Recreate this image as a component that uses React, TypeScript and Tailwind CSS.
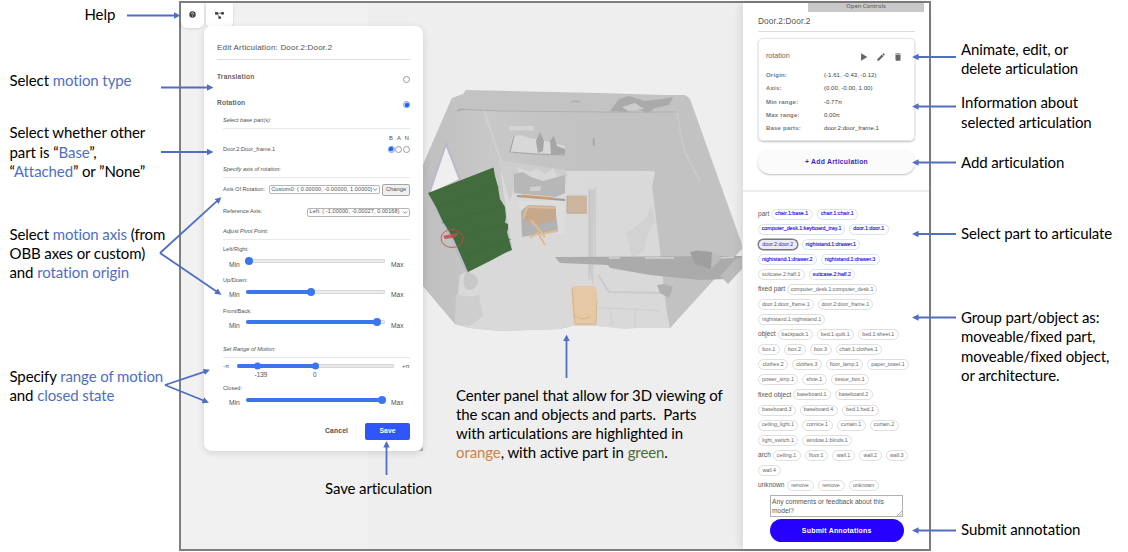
import React from "react";

const BLUE = "text-[#4f6fc1]";

function Caption({ className = "", children }: { className?: string; children: React.ReactNode }) {
  return (
    <p className={"font-['Lato','Carlito',sans-serif] text-[15px] leading-[19.2px] tracking-[-0.1px] whitespace-pre text-black [font-variant-ligatures:none] " + className}>
      {children}
    </p>
  );
}

function Radio({ on = false }: { on?: boolean }) {
  return (
    <span
      className={
        "flex size-[7px] shrink-0 items-center justify-center rounded-full border bg-white " +
        (on ? "border-[#6d9bef]" : "border-[#9a9a9a]")
      }
    >
      {on && <span className="size-[4px] shrink-0 rounded-full bg-[#1f66ea] shadow-[0_0_0_0.5px_#5f93ee]" />}
    </span>
  );
}

function Track({ value, width }: { value: number; width: string }) {
  return (
    <div className={"relative h-[4px] rounded-full bg-[#ececec] shadow-[inset_0_0_0_0.5px_#c4c4c4] " + width}>
      <div className="h-full rounded-full bg-[#3b76ee]" style={{ width: `${value}%` }} />
      <span
        className="absolute top-1/2 size-[8px] -translate-x-1/2 -translate-y-1/2 rounded-full bg-[#3b76ee]"
        style={{ left: `${value}%` }}
      />
    </div>
  );
}

function SliderBlock({ label, value }: { label: string; value: number }) {
  return (
    <div className="h-[30.67px] pl-[6px]">
      <div className="flex h-[16px] items-center pt-[4px]">{label}</div>
      <div className="flex items-start">
        <span className="mt-[5.5px] ml-[6px] w-[17px] text-[6.6px]">Min</span>
        <div className="mt-[3px]">
          <Track value={value} width="w-[139px]" />
        </div>
        <span className="mt-[5.5px] ml-[6px] text-[6.6px]">Max</span>
      </div>
    </div>
  );
}

function Chevron() {
  return (
    <svg viewBox="0 0 6 4" className="ml-auto h-[3px] w-[4.5px] shrink-0" fill="none" stroke="#555" strokeWidth="0.9">
      <path d="M0.5 0.5 3 3.2 5.5 0.5" />
    </svg>
  );
}

function EditPanel() {
  return (
    <section className="relative -mt-[2px] ml-[23px] h-[425px] w-[219px] rounded-[8px] bg-white pr-[13px] pl-[13px] font-['Liberation_Sans',Arial,sans-serif] text-[5.6px] leading-none text-[#505050] shadow-[0_2px_7px_rgba(0,0,0,0.13)]">
      <h2 className="flex h-[34px] items-center border-b border-[#dedede] pt-[10px] text-[8px] tracking-[0.2px] whitespace-nowrap">
        Edit Articulation: Door.2:Door.2
      </h2>
      <div className="mt-[5px] flex h-[26px] items-center justify-between text-[6.6px] font-bold tracking-[0.2px] text-[#666]">
        <span className="-mt-[1px]">Translation</span>
        <span className="mt-[3px]">
          <Radio />
        </span>
      </div>
      <div className="flex h-[25px] items-center justify-between text-[6.6px] font-bold tracking-[0.2px] text-[#666]">
        <span className="-mt-[1px]">Rotation</span>
        <span className="mt-[2px]">
          <Radio on />
        </span>
      </div>
      <div className="ml-[6px] flex h-[13px] items-center border-b border-[#e9e9e9] pb-[3px] italic">Select base part(s):</div>
      <div className="flex h-[14px] items-center justify-end gap-[4px] pt-[5px] pr-[1px] text-[5.8px]">
        <span>B</span>
        <span>A</span>
        <span>N</span>
      </div>
      <div className="ml-[6px] flex h-[14px] items-center">
        <span className="flex-1">Door.2:Door_frame.1</span>
        <div className="-mt-[2px] flex gap-[0.6px]">
          <Radio on />
          <Radio />
          <Radio />
        </div>
      </div>
      <div className="ml-[6px] flex h-[21px] items-center border-b border-[#e9e9e9] pt-[9px] pb-[3px] italic">Specify axis of rotation:</div>
      <div className="ml-[6px] flex h-[23px] items-center whitespace-nowrap">
        <span className="w-[46px]">Axis Of Rotation:</span>
        <div className="flex h-[9px] w-[112px] items-center rounded-[2px] border border-[#b5b5b5] px-[1.5px] text-[5.5px] tracking-[0.09px]">
          Custom0: ( 0.00000, -0.00000, 1.00000)
          <Chevron />
        </div>
        <button className="ml-[2px] flex h-[12px] w-[28px] items-center justify-center rounded-[2px] border border-[#a5a5a5] bg-[#efefef] text-[5.8px]">
          Change
        </button>
      </div>
      <div className="ml-[6px] flex h-[22px] items-center justify-between whitespace-nowrap">
        <span>Reference Axis:</span>
        <div className="flex h-[9px] w-[103px] items-center rounded-[2px] border border-[#b5b5b5] px-[1.5px] text-[5.5px] tracking-[0.09px]">
          Left: ( -1.00000, -0.00027, 0.00168)
          <Chevron />
        </div>
      </div>
      <div className="ml-[6px] flex h-[17px] items-center border-b border-[#e9e9e9] pt-[1px] italic">Adjust Pivot Point:</div>
      <SliderBlock label="Left/Right:" value={2.5} />
      <SliderBlock label="Up/Down:" value={47} />
      <SliderBlock label="Front/Back:" value={94} />
      <div className="ml-[6px] flex h-[26px] items-center border-b border-[#e9e9e9] pt-[10px] italic">Set Range of Motion:</div>
      <div className="ml-[6px] h-[21px] pt-[5px]">
        <div className="flex items-center">
          <span className="w-[14px] text-[6px]">-π</span>
          <div className="relative h-[4px] w-[157px] rounded-full bg-[#e8e8e8] shadow-[inset_0_0_0_0.5px_#c4c4c4]">
            <div className="h-full w-[78px] rounded-full bg-[#3b76ee]" />
            <span className="absolute top-1/2 left-[17px] size-[7px] -translate-y-1/2 rounded-full bg-[#3b76ee]" />
            <span className="absolute top-1/2 left-[75px] size-[7px] -translate-y-1/2 rounded-full bg-[#3b76ee]" />
          </div>
          <span className="ml-[8px] text-[6px]">+π</span>
        </div>
        <div className="mt-[3px] flex pl-[31.5px] text-[6.4px]">
          <span className="w-[58.5px]">-139</span>
          <span>0</span>
        </div>
      </div>
      <SliderBlock label="Closed:" value={97.5} />
      <div className="mt-[13px] flex items-center justify-end text-[6.8px] font-bold">
        <span className="mr-[17px] tracking-[0.1px]">Cancel</span>
        <button className="flex h-[17px] w-[45px] items-center justify-center rounded-[2px] bg-[#2f55fb] text-white">Save</button>
      </div>
      <svg viewBox="0 0 4 4" className="absolute right-0 bottom-0 size-[4px]">
        <path d="M4 0V4H0Z" fill="#a9a9a9" />
      </svg>
    </section>
  );
}

type Chip = [string, string];
type ChipRow = { label?: string; lw?: string; blue?: string[]; chips: Chip[] };

const ROWS: ChipRow[] = [
  { label: "part", lw: "w-[13px]", blue: ["chair.1:base.1", "chair.1:chair.1"], chips: [["chair.1:base.1", "w-[41.5px]"], ["chair.1:chair.1", "w-[41.5px]"]] },
  { blue: ["computer_desk.1:keyboard_tray.1", "door.1:door.1"], chips: [["computer_desk.1:keyboard_tray.1", "w-[87px]"], ["door.1:door.1", "w-[39.5px]"]] },
  { blue: ["door.2:door.2", "nightstand.1:drawer.1"], chips: [["door.2:door.2", "w-[39.5px]"], ["nightstand.1:drawer.1", "w-[58.5px]"]] },
  { blue: ["nightstand.1:drawer.2", "nightstand.1:drawer.3"], chips: [["nightstand.1:drawer.2", "w-[58.5px]"], ["nightstand.1:drawer.3", "w-[59px]"]] },
  { blue: ["suitcase.2:half.2"], chips: [["suitcase.2:half.1", "w-[46.5px]"], ["suitcase.2:half.2", "w-[46.5px]"]] },
  { label: "fixed part", lw: "w-[29px]", chips: [["computer_desk.1:computer_desk.1", "w-[90px]"]] },
  { chips: [["door.1:door_frame.1", "w-[55.5px]"], ["door.2:door_frame.1", "w-[55.5px]"]] },
  { chips: [["nightstand.1:nightstand.1", "w-[67px]"]] },
  { label: "object", lw: "w-[19.5px]", chips: [["backpack.1", "w-[35px]"], ["bed.1:quilt.1", "w-[37.5px]"], ["bed.1:sheet.1", "w-[40.5px]"]] },
  { chips: [["box.1", "w-[21.5px]"], ["box.2", "w-[22px]"], ["box.3", "w-[22px]"], ["chair.1:clothes.1", "w-[46px]"]] },
  { chips: [["clothes.2", "w-[30px]"], ["clothes.3", "w-[29.5px]"], ["floor_lamp.1", "w-[37.5px]"], ["paper_towel.1", "w-[42px]"]] },
  { chips: [["power_strip.1", "w-[40px]"], ["shoe.1", "w-[24.5px]"], ["tissue_box.1", "w-[38.5px]"]] },
  { label: "fixed object", lw: "w-[35px]", chips: [["baseboard.1", "w-[37.5px]"], ["baseboard.2", "w-[38px]"]] },
  { chips: [["baseboard.3", "w-[37.5px]"], ["baseboard.4", "w-[38px]"], ["bed.1:bed.1", "w-[37px]"]] },
  { chips: [["ceiling_light.1", "w-[40px]"], ["cornice.1", "w-[30.5px]"], ["curtain.1", "w-[29px]"], ["curtain.2", "w-[29px]"]] },
  { chips: [["light_switch.1", "w-[40px]"], ["window.1:blinds.1", "w-[50px]"]] },
  { label: "arch", lw: "w-[14.5px]", chips: [["ceiling.1", "w-[28px]"], ["floor.1", "w-[23.5px]"], ["wall.1", "w-[23px]"], ["wall.2", "w-[22.5px]"], ["wall.3", "w-[22.5px]"]] },
  { chips: [["wall.4", "w-[22.5px]"]] },
  { label: "unknown", lw: "w-[28.5px]", chips: [["remove", "w-[27px]"], ["remove", "w-[27px]"], ["unknown", "w-[30px]"]] },
];

function chipTone(name: string, blue?: string[]) {
  if (name === "door.2:door.2") return "border-[#77777f] border bg-[#ececf6] text-[#2b15d8] shadow-[0_0_0_0.5px_#77777f]";
  if (blue?.includes(name)) return "border-[#d6e4ec] border text-[#2b15e8] [-webkit-text-stroke:0.15px_#2b15e8]";
  return "border-[#dedede] border text-[#666]";
}

const INFO = [
  ["Origin:", "(-1.61, -0.43, -0.12)"],
  ["Axis:", "(0.00, -0.00, 1.00)"],
  ["Min range:", "-0.77π"],
  ["Max range:", "0.00π"],
  ["Base parts:", "door.2:door_frame.1"],
];

function Sidebar() {
  return (
    <aside className="relative ml-auto flex h-full w-[186px] flex-col bg-white pr-[14px] pl-[15px] font-['Liberation_Sans',Arial,sans-serif] leading-none text-[#444] shadow-[-2px_0_9px_rgba(0,0,0,0.1)]">
      <div className="-mr-[9px] ml-[50px] flex h-[8.5px] shrink-0 items-center justify-center bg-[#c8c8c8] font-['Noto_Sans',sans-serif] text-[5.8px] text-[#555]">
        Open Controls
      </div>
      <h2 className="flex h-[20px] shrink-0 items-center border-b border-[#dcdcdc] text-[8.3px] tracking-[0.1px] text-[#555]">Door.2:Door.2</h2>
      <div className="mt-[6.5px] h-[103px] shrink-0 rounded-[5px] border border-[#e6e6e6] px-[7px] shadow-[0_1px_2px_rgba(0,0,0,0.25)]">
        <div className="mt-[7px] flex h-[22px] items-center text-[7.1px] text-[#666]">
          <span className="flex-1">rotation</span>
          <svg viewBox="0 0 24 24" className="mr-[7px] size-[10px]" fill="#666">
            <path d="M5 3v18l15-9z" />
          </svg>
          <svg viewBox="0 0 24 24" className="mr-[7px] size-[10px]" fill="#666">
            <path d="M3 17.25V21h3.75L17.81 9.94l-3.75-3.75L3 17.25zM20.71 7.04a1 1 0 0 0 0-1.41l-2.34-2.34a1 1 0 0 0-1.41 0l-1.83 1.83 3.75 3.75 1.83-1.83z" />
          </svg>
          <svg viewBox="0 0 24 24" className="mr-[4px] size-[10px]" fill="#666">
            <path d="M6 19c0 1.1.9 2 2 2h8c1.1 0 2-.9 2-2V7H6v12zM19 4h-3.500l-1-1h-5l-1 1H5v2h14V4z" />
          </svg>
        </div>
        {INFO.map(([k, v]) => (
          <div key={k} className="flex h-[13.25px] items-center pt-px text-[6px] whitespace-nowrap">
            <span className="w-[58px] font-bold tracking-[0.2px] text-[#777]">{k}</span>
            <span className="text-[6.1px]">{v}</span>
          </div>
        ))}
      </div>
      <button className="mt-[9px] flex h-[24px] shrink-0 items-center justify-center rounded-full bg-[#fbfbfb] text-[6.8px] font-bold tracking-[0.27px] text-[#3a1fc0] shadow-[0_1px_2px_rgba(0,0,0,0.25)]">
        + Add Articulation
      </button>
      <div className="-mr-[14px] -ml-[15px] mt-[16px] h-[2px] shrink-0 bg-[#ededed]" />
      <div className="mt-[14.500px] flex flex-col">
        {ROWS.map((row, i) => (
          <div key={i} className="flex h-[15.08px] items-center gap-[4px] whitespace-nowrap">
            {row.label && <span className={"-mr-[4px] shrink-0 text-[6.6px] text-[#555] " + row.lw}>{row.label}</span>}
            {row.chips.map(([name, w], j) => (
              <span
                key={j}
                className={"flex h-[11px] shrink-0 items-center justify-center rounded-full text-[5.3px] " + w + " " + chipTone(name, row.blue)}
              >
                {name}
              </span>
            ))}
          </div>
        ))}
      </div>
      <div className="relative mt-[2px] ml-[12px] h-[22px] w-[133px] shrink-0 border border-[#b0b0b0] pt-[1px] pl-px text-[6.7px] leading-[9.3px] whitespace-pre text-[#555]">
        {"Any comments or feedback about this\nmodel?"}
        <svg viewBox="0 0 5 5" className="absolute right-0 bottom-0 size-[5px]" stroke="#777" strokeWidth="0.6">
          <path d="M0 5 5 0M2.5 5 5 2.5" />
        </svg>
      </div>
      <button className="mt-[2px] ml-[12px] flex h-[23.5px] w-[133.5px] shrink-0 items-center justify-center rounded-full bg-[#2600ff] text-[7px] font-bold tracking-[0.2px] text-white">
        Submit Annotations
      </button>
    </aside>
  );
}

function RoomScan() {
  return (
    <svg viewBox="181 3 748 546" className="absolute inset-0 h-full w-full">
      <defs>
        <filter id="soft" x="-20%" y="-20%" width="140%" height="140%">
          <feGaussianBlur stdDeviation="0.6" />
        </filter>
        <linearGradient id="leftWall" x1="0" x2="1">
          <stop offset="0" stopColor="#bfbfbf" />
          <stop offset="1" stopColor="#cbcbcb" />
        </linearGradient>
        <linearGradient id="backWall" x1="0" x2="1">
          <stop offset="0" stopColor="#cbcbcb" />
          <stop offset="0.400" stopColor="#c3c3c3" />
          <stop offset="1" stopColor="#c2c2c2" />
        </linearGradient>
      </defs>
      <rect x="368" y="3" width="400" height="546" fill="#eeeeee" />
      <g filter="url(#soft)">
        <path d="M423 165 452 98 463 94 466 90 600 93 665 95 685 95 690 99 741.500 243 742 249 670 328 625 328 598 326 572 326 560 329 500 331 470 328 455 324 423 286Z" fill="#c3c3c3" />
        <path d="M457 112 500 111 677 112 690 170 565 172 500 170 490 150Z" fill="url(#backWall)" />
        <path d="M423 165 452 98 458 112 482 110 502 180 512 215 515 250 470 275 455 324 423 286Z" fill="url(#leftWall)" />
        <path d="M484 110 502 165 512 205" fill="none" stroke="#d0d0d0" strokeWidth="2" />
        <path d="M500 171 655 171 656 200 664 280 670 328 625 328 598 326 572 326 560 329 500 331 470 328 455 322 460 275 512 246Z" fill="#d9d9d9" />
        <path d="M498 160 565 170 572 184 514 186 510 202Z" fill="#cdcdcd" />
        <path d="M458 109 500 111 600 112 680 112 687 98" fill="none" stroke="#b0b0b0" strokeWidth="1" />
        <path d="M685 96 741 246 670 328 663 292 652 187 655 173 648 140 677 112Z" fill="#c2c2c2" />
        <path d="M677 113 684 150 700 182" fill="none" stroke="#cbcbcb" strokeWidth="1.500" />
        <path d="M610 111 619 99 629 96 645 101 662 99 673 97 669 105 655 108 648 113 637 109 626 112Z" fill="#aaaaaa" />
        <path d="M622 107 635 103 644 109 628 111Z" fill="#cdcdcd" />
        <path d="M571 102 575 101 580 102M457 111 464 109" stroke="#a5a5a5" strokeWidth="1" fill="none" />
        <rect x="509" y="126" width="25" height="4.500" fill="#d4d4d4" />
        <path d="M512 137 520 135 530 138 545 141 565 146 565 154 510 153Z" fill="#d8d8d8" />
        <path d="M514 136 510 152 535 154 565 155" fill="none" stroke="#a5a5a5" strokeWidth="1.200" />
        <path d="M536 141 540 132 544 141 543 151 538 153ZM550 141 554 136 557 146 565 149 565 154 551 154Z" fill="#a6a6a6" />
        <rect x="592.500" y="138" width="2.500" height="8" rx="1" fill="#adadad" />
        <path d="M517 167 530 172 537 169 545 174 553 168 560 180 540 183 520 176Z" fill="#d8d8d8" />
        <path d="M514 174 523 172 531 177 543 181 565 175 565 193 556 197 514 193Z" fill="#b7b7b7" />
        <path d="M530 187 541 186 540 191 530 191Z" fill="#d0d0d0" />
        <path d="M566 176 572 178 580 174 588 180 586 193 567 194Z" fill="#dadada" />
        <path d="M518 201 565 201 565 234 556 233 545 236 523 232Z" fill="#dddddd" />
        <path d="M521 211 528 205 555 206 558 230 540 234 522 237Z" fill="#b2b2b2" />
        <path d="M517 196 565 200" stroke="#9c9c9c" strokeWidth="1.800" />
        <path d="M522 195.500 554 198.500" stroke="#d39c68" strokeWidth="2" />
        <path d="M526 207 556 207 556 220 538 224 525 221Z" fill="#c6a88a" />
        <path d="M528 207 556 208" stroke="#e0bb91" strokeWidth="2" />
        <path d="M523 218 528 206M531 220 545 237M530 238 538 233 545 245M558 231 541 234" stroke="#dfba92" strokeWidth="2" fill="none" />
        <rect x="567" y="195.500" width="20" height="18" fill="#cdb69f" />
        <path d="M567 196V213H587" stroke="#b9a186" strokeWidth="0.700" fill="none" />
        <path d="M596 188 602 183 620 182 652 187 655 210 660 250 668 326 625 329 598 326 594 290 591 285Z" fill="#d9d9d9" />
        <path d="M589 188 589 270 593 287 594 190Z" fill="#cbcbcb" />
        <path d="M595 187V262M589 190V280" stroke="#bbbbbb" strokeWidth="0.800" fill="none" />
        <path d="M594 173.500 654 173 654 175 600 176Z" fill="#dadada" />
        <path d="M598 275 609 292 667 293" stroke="#cbcbcb" strokeWidth="2" fill="none" />
        <path d="M598 308 635 309 660 311M635 309V327M610 309 612 325" stroke="#cccccc" strokeWidth="0.800" fill="none" />
        <path d="M626 232Q648 222 651 205L656 221Q648 228 644 250L632 258Z" fill="#d2d2d2" />
        <path d="M555 257 742 256 742 269 725 279 700 280 650 275 610 268 608 265 560 263Z" fill="#ababab" />
        <path d="M609 258 620 258M645 258 674 258M720 258 734 257" stroke="#d3d3d3" strokeWidth="1.500" />
        <path d="M690 252 697 250.500 712 252 711 269 695 264Z" fill="#9f9f9f" />
        <path d="M712 252 711 269 722 258Z" fill="#bbb" />
        <path d="M657 285 664 284 673 287 669 298 660 293Z" fill="#b0b0b0" />
        <path d="M720 276 736 259 742 257 742 269 728 284Z" fill="#bbbbbb" />
        <path d="M572 287 576 286H594Q598 287 597 300L596 325H575Q571 310 572 287Z" fill="#e6c8a4" />
        <path d="M572 288 575 324 596 324 597 300M573 315Q583 322 590 316" stroke="#cfb08a" strokeWidth="0.800" fill="none" />
        <path d="M465 273Q477 271 478 283 475 291 467 290 461 284 465 273Z" fill="#c8c8c8" />
        <path d="M456 294Q468 298 479 295L483 316 470 326 455 323Z" fill="#cecece" />
        <path d="M430 193 446 145 459 179Z" fill="#efefef" />
        <path d="M429 194 446 144 460 180M429 194 468 273" stroke="#bdb8ca" strokeWidth="2" fill="none" />
      </g>
      <path d="M428 193 493.500 167.500 495 176 498 187 500 199 505 207 506 217 505 223 508 224 508 229 507 232 512 250 505 253 490 261 468 272 454 240 442 220 436 207Z" fill="#426c3d" />
      <path d="M437 207 499 187M442 223 503 206M455 238 507 223M464 256 511 239" stroke="#3c6538" strokeWidth="1" fill="none" opacity="0.600" />
      <g fill="none" stroke="#c0504d" strokeWidth="1" opacity="0.850">
        <ellipse cx="452" cy="238.500" rx="11" ry="9" />
        <path d="M444 236 458 233.500 455 237 445 238.500Z" fill="#c0504d" />
      </g>
    </svg>
  );
}

const ARROWS: number[][] = [
  [127, 15.5, 180, 15.5],
  [161, 87.5, 213, 87.5],
  [161, 152, 213, 152],
  [160, 253, 221, 197.5],
  [160, 253, 221, 294.5],
  [165, 385, 209.5, 370],
  [165, 385, 208.5, 402.5],
  [386.5, 475, 386.5, 441.5],
  [566.5, 378, 566.5, 335],
  [956, 57, 912.5, 57],
  [956, 106.5, 912.5, 106.5],
  [956, 162.5, 912.5, 162.5],
  [956, 234, 912.5, 234],
  [956, 317.5, 912.5, 317.5],
  [956, 530.5, 912.5, 530.5],
];

function Arrows() {
  return (
    <svg viewBox="0 0 1128 552" className="pointer-events-none absolute inset-0 h-[552px] w-[1128px]">
      <defs>
        <marker id="tip" viewBox="0 0 7 7" refX="6.5" refY="3.5" markerWidth="6.5" markerHeight="6.5" markerUnits="userSpaceOnUse" orient="auto">
          <path d="M0 0 7 3.5 0 7Z" fill="#4f6fc1" />
        </marker>
      </defs>
      {ARROWS.map(([x1, y1, x2, y2], i) => {
        const len = Math.hypot(x2 - x1, y2 - y1);
        const k = (len - 4) / len;
        return (
          <g key={i}>
            <line x1={x1} y1={y1} x2={x1 + (x2 - x1) * k} y2={y1 + (y2 - y1) * k} stroke="#4f6fc1" strokeWidth="1.8" />
            <line x1={x1} y1={y1} x2={x2} y2={y2} stroke="none" markerEnd="url(#tip)" />
          </g>
        );
      })}
    </svg>
  );
}

export default function App() {
  return (
    <main className="relative flex h-[552px] w-[1128px] overflow-hidden bg-white">
      <div className="flex w-[179px] shrink-0 flex-col pt-[5px] pl-[9.5px]">
        <Caption className="ml-[75px]">Help</Caption>
        <Caption className="mt-[47px]">
          Select <span className={BLUE}>motion type</span>
        </Caption>
        <Caption className="mt-[33px]">
          Select whether other{"\n"}part is “<span className={BLUE}>Base</span>”,{"\n"}“<span className={BLUE}>Attached</span>” or ”None”
        </Caption>
        <Caption className="mt-[43.5px]">
          Select <span className={BLUE}>motion axis</span> (from{"\n"}OBB axes or custom){"\n"}and <span className={BLUE}>rotation origin</span>
        </Caption>
        <Caption className="mt-[84.5px]">
          Specify <span className={BLUE}>range of motion</span>
          {"\n"}and <span className={BLUE}>closed state</span>
        </Caption>
      </div>

      <div className="relative mt-px flex h-[550px] w-[752px] shrink-0 border-2 border-[#7f7f7f] bg-[#f1f1f1]">
        <RoomScan />
        <div className="relative">
          <div className="flex gap-[2px]">
            <div className="flex h-[25px] w-[23px] items-center justify-center rounded-b-[6px] bg-white shadow-[0_1px_3px_rgba(0,0,0,0.12)]">
              <svg viewBox="0 0 24 24" className="-mt-[2px] size-[7px]">
                <circle cx="12" cy="12" r="11" fill="#444" />
                <path d="M8.5 9.5a3.5 3.5 0 1 1 5 3.2c-1 .5-1.5 1-1.5 2.3M12 17v2.2" fill="none" stroke="#fff" strokeWidth="2.4" />
              </svg>
            </div>
            <div className="flex h-[25px] w-[27px] items-center justify-center rounded-b-[6px] bg-white shadow-[0_1px_3px_rgba(0,0,0,0.12)]">
              <svg viewBox="0 0 20 16" className="-mt-px h-[7px] w-[9px]" fill="#333" stroke="#333" strokeWidth="1.5">
                <rect x="1" y="1" width="4" height="4" />
                <rect x="15" y="1" width="4" height="4" />
                <rect x="8.5" y="11" width="4" height="4" />
                <path d="M5 3H15M4.5 4 10 12" fill="none" />
              </svg>
            </div>
          </div>
          <EditPanel />
        </div>
        <Sidebar />
      </div>

      <div className="flex flex-col pt-[39.5px] pl-[30px]">
        <Caption>{"Animate, edit, or\ndelete articulation"}</Caption>
        <Caption className="mt-[15.5px]">{"Information about\nselected articulation"}</Caption>
        <Caption className="mt-[21.5px]">Add articulation</Caption>
        <Caption className="mt-[51.5px]">Select part to articulate</Caption>
        <Caption className="mt-[65px]">{"Group part/object as:\nmoveable/fixed part,\nmoveable/fixed object,\nor architecture."}</Caption>
        <Caption className="mt-[135px]">Submit annotation</Caption>
      </div>

      <Caption className="absolute top-[479px] left-[325px]">Save articulation</Caption>
      <Caption className="absolute top-[385.5px] left-[456px]">
        {"Center panel that allow for 3D viewing of\nthe scan and objects and parts.  Parts\nwith articulations are highlighted in\n"}
        <span className="text-[#d08247]">orange</span>, with active part in <span className="text-[#476b40]">green</span>.
      </Caption>
      <Arrows />
    </main>
  );
}
